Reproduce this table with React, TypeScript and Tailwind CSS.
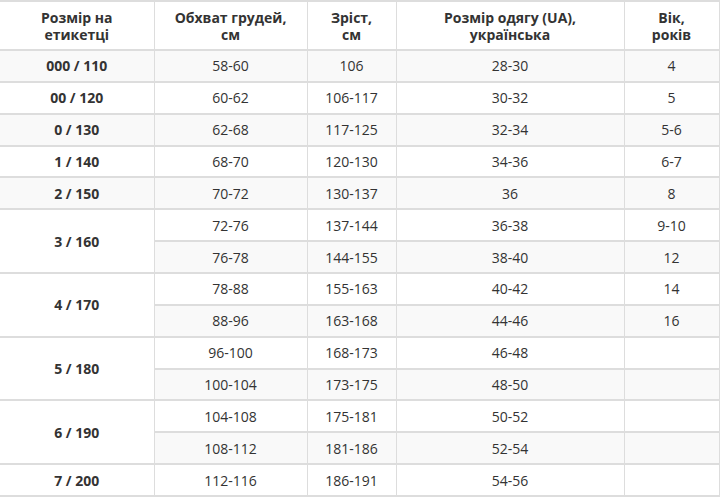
import React from "react";

type Row = { size?: string; span?: number; chest: string; height: string; ua: string; age: string };

const rows: Row[] = [
  { size: "000 / 110", chest: "58-60", height: "106", ua: "28-30", age: "4" },
  { size: "00 / 120", chest: "60-62", height: "106-117", ua: "30-32", age: "5" },
  { size: "0 / 130", chest: "62-68", height: "117-125", ua: "32-34", age: "5-6" },
  { size: "1 / 140", chest: "68-70", height: "120-130", ua: "34-36", age: "6-7" },
  { size: "2 / 150", chest: "70-72", height: "130-137", ua: "36", age: "8" },
  { size: "3 / 160", span: 2, chest: "72-76", height: "137-144", ua: "36-38", age: "9-10" },
  { chest: "76-78", height: "144-155", ua: "38-40", age: "12" },
  { size: "4 / 170", span: 2, chest: "78-88", height: "155-163", ua: "40-42", age: "14" },
  { chest: "88-96", height: "163-168", ua: "44-46", age: "16" },
  { size: "5 / 180", span: 2, chest: "96-100", height: "168-173", ua: "46-48", age: "" },
  { chest: "100-104", height: "173-175", ua: "48-50", age: "" },
  { size: "6 / 190", span: 2, chest: "104-108", height: "175-181", ua: "50-52", age: "" },
  { chest: "108-112", height: "181-186", ua: "52-54", age: "" },
  { size: "7 / 200", chest: "112-116", height: "186-191", ua: "54-56", age: "" },
];

const cell = "border-y-2 border-x border-[#dddddd] text-center align-middle p-0";

export default function App() {
  return (
    <div className="w-[720px] h-[498px] bg-white overflow-hidden" style={{ fontFamily: '"Open Sans", "Noto Sans", sans-serif' }}>
      <table className="table-fixed border-collapse text-[14px] text-[#333333] w-[719px]">
        <colgroup>
          <col className="w-[154px]" />
          <col className="w-[153px]" />
          <col className="w-[89px]" />
          <col className="w-[228px]" />
          <col className="w-[95px]" />
        </colgroup>
        <thead>
          <tr className="h-[49px]">
            <th className={`${cell} border-l-0 font-bold leading-[17px]`}>Розмір на<br />етикетці</th>
            <th className={`${cell} font-bold leading-[17px]`}>Обхват грудей,<br />см</th>
            <th className={`${cell} font-bold leading-[17px]`}>Зріст,<br />см</th>
            <th className={`${cell} font-bold leading-[17px]`}>Розмір одягу (UA),<br />українська</th>
            <th className={`${cell} font-bold leading-[17px]`}>Вік,<br />років</th>
          </tr>
        </thead>
        <tbody>
          {rows.map((r, i) => (
            <tr key={i} className={`h-[31.86px] ${i % 2 === 0 ? "bg-[#f9f9f9]" : "bg-white"}`}>
              {r.size !== undefined && (
                <td rowSpan={r.span ?? 1} className={`${cell} border-l-0 font-bold`}>
                  {r.size}
                </td>
              )}
              <td className={cell}>{r.chest}</td>
              <td className={cell}>{r.height}</td>
              <td className={cell}>{r.ua}</td>
              <td className={cell}>{r.age}</td>
            </tr>
          ))}
        </tbody>
      </table>
    </div>
  );
}
